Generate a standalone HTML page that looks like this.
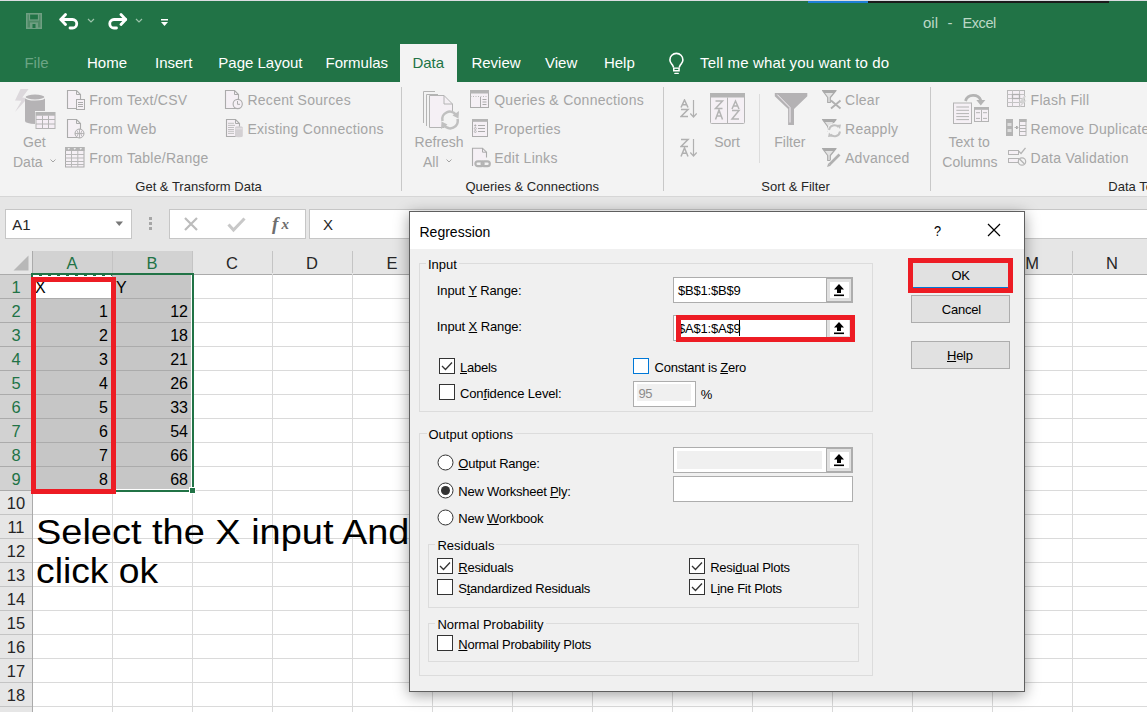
<!DOCTYPE html>
<html><head><meta charset="utf-8"><style>
html,body{margin:0;padding:0}
body{width:1147px;height:712px;overflow:hidden;position:relative;font-family:"Liberation Sans",sans-serif;background:#fff}
.t{position:absolute;white-space:nowrap}
.r{position:absolute;display:block}
u{text-decoration-thickness:1px;text-underline-offset:1px}
</style></head><body>
<div class="r" style="left:0px;top:0px;width:1147px;height:82px;background:#217346"></div>
<div class="r" style="left:0px;top:0px;width:1147px;height:1px;background:#dcdde2"></div>
<div class="r" style="left:808px;top:1px;width:60px;height:2px;background:#1f7fd6"></div>
<div class="r" style="left:868px;top:1px;width:241px;height:2px;background:#1b1b1b"></div>
<svg class="r" style="left:26px;top:13px;" width="16" height="16" viewBox="0 0 16 16"><rect x="0.75" y="0.75" width="14.5" height="14.5" fill="#4f8a66" stroke="#6f9f82" stroke-width="1.5"/><rect x="3.5" y="1" width="9" height="6" fill="#217346" stroke="#6f9f82" stroke-width="1.2"/><rect x="4" y="9.5" width="8" height="5.5" fill="#6f9f82"/><rect x="6.5" y="11" width="3" height="4" fill="#217346"/></svg>
<svg class="r" style="left:59px;top:13px;" width="22" height="18" viewBox="0 0 22 18"><path d="M2 6.5 H13.5 A4.25 4.25 0 0 1 13.5 15 H11" stroke="#fff" stroke-width="2.8" fill="none" stroke-linecap="round"/><path d="M6.5 1.5 L1.8 6.5 L6.5 11.5" stroke="#fff" stroke-width="2.8" fill="none" stroke-linecap="round" stroke-linejoin="round"/></svg>
<svg class="r" style="left:87px;top:18px;" width="8" height="5" viewBox="0 0 8 5"><path d="M1 1 L4 4 L7 1" stroke="#9cc4ab" stroke-width="1.2" fill="none"/></svg>
<svg class="r" style="left:106px;top:13px;" width="22" height="18" viewBox="0 0 22 18"><path d="M19.5 6.5 H8 A4.25 4.25 0 0 0 8 15 H10.5" stroke="#fff" stroke-width="2.8" fill="none" stroke-linecap="round"/><path d="M15 1.5 L19.7 6.5 L15 11.5" stroke="#fff" stroke-width="2.8" fill="none" stroke-linecap="round" stroke-linejoin="round"/></svg>
<svg class="r" style="left:135px;top:18px;" width="8" height="5" viewBox="0 0 8 5"><path d="M1 1 L4 4 L7 1" stroke="#9cc4ab" stroke-width="1.2" fill="none"/></svg>
<svg class="r" style="left:160px;top:18px;" width="9" height="9" viewBox="0 0 9 9"><rect x="1" y="1" width="7" height="1.5" fill="#fff"/><path d="M1 4 H8 L4.5 8 Z" fill="#fff"/></svg>
<div class="t " style="left:923px;top:15.30px;font-size:15px;line-height:15px;color:#bcd8c6;">oil</div>
<div class="t " style="left:947.5px;top:15.30px;font-size:15px;line-height:15px;color:#bcd8c6;">-</div>
<div class="t " style="left:962.6px;top:15.72px;font-size:14.5px;line-height:14.5px;color:#bcd8c6;letter-spacing:-0.45px">Excel</div>
<div class="r" style="left:400px;top:44px;width:57px;height:38px;background:#f3f3f3"></div>
<div class="t " style="left:24.4px;top:54.90px;font-size:15px;line-height:15px;color:#6ca585;">File</div>
<div class="t " style="left:87px;top:54.90px;font-size:15px;line-height:15px;color:#fff;">Home</div>
<div class="t " style="left:155px;top:54.90px;font-size:15px;line-height:15px;color:#fff;">Insert</div>
<div class="t " style="left:218.3px;top:54.90px;font-size:15px;line-height:15px;color:#fff;">Page Layout</div>
<div class="t " style="left:325.6px;top:54.90px;font-size:15px;line-height:15px;color:#fff;">Formulas</div>
<div class="t " style="left:412.4px;top:54.90px;font-size:15px;line-height:15px;color:#217346;">Data</div>
<div class="t " style="left:471.4px;top:54.90px;font-size:15px;line-height:15px;color:#fff;">Review</div>
<div class="t " style="left:545px;top:54.90px;font-size:15px;line-height:15px;color:#fff;">View</div>
<div class="t " style="left:603.9px;top:54.90px;font-size:15px;line-height:15px;color:#fff;">Help</div>
<div class="t " style="left:700.1px;top:54.90px;font-size:15px;line-height:15px;color:#fff;letter-spacing:0.15px">Tell me what you want to do</div>
<svg class="r" style="left:667px;top:52px;" width="19" height="23" viewBox="0 0 19 23"><path d="M6.6 15.5 L5.6 13.2 C4.2 11.3 2.9 10.2 2.9 7.9 A6.5 6.5 0 0 1 15.9 7.9 C15.9 10.2 14.6 11.3 13.2 13.2 L12.2 15.5" stroke="#fff" stroke-width="1.6" fill="none"/><rect x="6" y="15.5" width="6.8" height="4" fill="#fff"/><rect x="7.5" y="16.8" width="3.8" height="1.2" fill="#217346"/><rect x="7.2" y="20.8" width="4.7" height="1.3" rx="0.6" fill="#fff"/></svg>
<div class="r" style="left:0px;top:82px;width:1147px;height:114px;background:#f3f3f3"></div>
<div class="r" style="left:0px;top:196px;width:1147px;height:1px;background:#d6d6d6"></div>
<div class="r" style="left:401px;top:87px;width:1px;height:104px;background:#c8c8c8"></div>
<div class="r" style="left:663px;top:87px;width:1px;height:104px;background:#c8c8c8"></div>
<div class="r" style="left:930px;top:87px;width:1px;height:104px;background:#c8c8c8"></div>
<div class="r" style="left:759px;top:94px;width:1px;height:69px;background:#dcdcdc"></div>
<div class="t " style="left:135.3px;top:179.99px;font-size:13px;line-height:13px;color:#262626;">Get &amp; Transform Data</div>
<div class="t " style="left:465.4px;top:179.99px;font-size:13px;line-height:13px;color:#262626;">Queries &amp; Connections</div>
<div class="t " style="left:761.3px;top:179.99px;font-size:13px;line-height:13px;color:#262626;">Sort &amp; Filter</div>
<div class="t " style="left:1108.3px;top:179.99px;font-size:13px;line-height:13px;color:#262626;">Data Tools</div>
<svg class="r" style="left:14px;top:88px;" width="44" height="44" viewBox="0 0 44 44"><path d="M6.5 1 L14.6 1 L8.3 9.6 L13.5 10.3 L1 24 L7.5 12.8 L1 12.5 Z" fill="#dcd8dc"/>
<path d="M11 9 A10 3 0 0 1 31 9 V33 A10 3 0 0 1 11 33 Z" fill="#b5b3b5"/>
<ellipse cx="21" cy="9" rx="10" ry="3" fill="#b5b3b5" stroke="#f3f3f3" stroke-width="1.2"/>
<rect x="21" y="23" width="22" height="19" fill="#f3f3f3"/>
<rect x="22" y="24.5" width="19" height="16" fill="#f5eef5" stroke="#b4b4b4"/>
<rect x="22" y="24.5" width="19" height="3.2" fill="#b4b4b4"/>
<path d="M22 31.5 H41 M22 36 H41 M28.5 27.5 V40.5 M34.5 27.5 V40.5" stroke="#b4b4b4"/></svg>
<div class="t " style="left:23px;top:135.15px;font-size:14px;line-height:14px;color:#a5a5a5;">Get</div>
<div class="t " style="left:13px;top:155.15px;font-size:14px;line-height:14px;color:#a5a5a5;">Data</div>
<svg class="r" style="left:50px;top:159px;" width="6" height="4" viewBox="0 0 6 4"><path d="M0.5 0.5 L3 3 L5.5 0.5" stroke="#a5a5a5" fill="none"/></svg>
<svg class="r" style="left:66px;top:90px;" width="19" height="20" viewBox="0 0 19 20"><path d="M1.5 0.5 H10.5 L14.5 4.5 V18.5 H1.5 Z" fill="#f5f0f5" stroke="#ababab" stroke-width="1.1"/><path d="M10.5 0.5 V4.5 H14.5" fill="none" stroke="#ababab"/><rect x="10.5" y="9.5" width="8" height="10" fill="#f5f0f5" stroke="#ababab"/><path d="M12 12.5 H17 M12 14.5 H17 M12 16.5 H17" stroke="#ababab"/></svg>
<div class="t " style="left:89.2px;top:93.15px;font-size:14px;line-height:14px;color:#a5a5a5;letter-spacing:0.28px">From Text/CSV</div>
<svg class="r" style="left:66px;top:119px;" width="19" height="20" viewBox="0 0 19 20"><path d="M1.5 0.5 H10.5 L14.5 4.5 V18.5 H1.5 Z" fill="#f5f0f5" stroke="#ababab" stroke-width="1.1"/><path d="M10.5 0.5 V4.5 H14.5" fill="none" stroke="#ababab"/><circle cx="13.5" cy="14.5" r="4.5" fill="#f5f0f5" stroke="#ababab"/><path d="M9 14.5 H18 M13.5 10 V19 M11 11.5 Q13.5 14.5 11 17.5 M16 11.5 Q13.5 14.5 16 17.5" stroke="#ababab" fill="none" stroke-width="0.8"/></svg>
<div class="t " style="left:89.2px;top:121.85px;font-size:14px;line-height:14px;color:#a5a5a5;letter-spacing:0.28px">From Web</div>
<svg class="r" style="left:65px;top:147px;" width="20" height="21" viewBox="0 0 20 21"><rect x="0.5" y="0.5" width="18.5" height="19.5" fill="#f5f0f5" stroke="#ababab"/><rect x="0" y="0" width="19.5" height="4" fill="#b4b4b4"/><path d="M2.5 1.3 H5 L3.75 2.8 Z M8.5 1.3 H11 L9.75 2.8 Z M14.5 1.3 H17 L15.75 2.8 Z" fill="#fff"/><path d="M0.5 7.5 H19 M0.5 11 H19 M0.5 14.5 H19 M0.5 17.5 H19 M6.5 4 V20 M12.8 4 V20" stroke="#b9b9b9"/></svg>
<div class="t " style="left:89.2px;top:151.05px;font-size:14px;line-height:14px;color:#a5a5a5;letter-spacing:0.28px">From Table/Range</div>
<svg class="r" style="left:224px;top:90px;" width="19" height="20" viewBox="0 0 19 20"><path d="M1.5 0.5 H10.5 L14.5 4.5 V18.5 H1.5 Z" fill="#f5f0f5" stroke="#ababab" stroke-width="1.1"/><path d="M10.5 0.5 V4.5 H14.5" fill="none" stroke="#ababab"/><circle cx="13.7" cy="14" r="4.6" fill="#f5f0f5" stroke="#ababab" stroke-width="1.1"/><path d="M13.5 11 V14.3 H16" stroke="#ababab" fill="none"/></svg>
<div class="t " style="left:247.4px;top:93.15px;font-size:14px;line-height:14px;color:#a5a5a5;letter-spacing:0.28px">Recent Sources</div>
<svg class="r" style="left:225px;top:119px;" width="19" height="20" viewBox="0 0 19 20"><path d="M1.5 0.5 H10.5 L14.5 4.5 V17.5 H1.5 Z" fill="#f5f0f5" stroke="#ababab" stroke-width="1.1"/><path d="M10.5 0.5 V4.5 H14.5" fill="none" stroke="#ababab"/><path d="M3 4.3 H9 M3 6.4 H10 M3 8.5 H9 M3 10.5 H9 M3 12.3 H9 M3 14.4 H9" stroke="#b4b4b4" stroke-width="0.8"/><path d="M10 8.5 A3.9 1.2 0 0 1 17.8 8.5 V17 A3.9 1.2 0 0 1 10 17 Z" fill="#d3d0d3"/><path d="M10.5 9.8 H17.3" stroke="#f0eef0" stroke-width="0.7"/></svg>
<div class="t " style="left:247.4px;top:121.85px;font-size:14px;line-height:14px;color:#a5a5a5;letter-spacing:0.28px">Existing Connections</div>
<svg class="r" style="left:422px;top:90px;" width="40" height="40" viewBox="0 0 40 40"><path d="M1.5 33 V1.5 H13" stroke="#b4b4b4" fill="none"/>
<path d="M4.5 36 V4.5 H16" stroke="#b4b4b4" fill="none"/>
<path d="M7.5 5.5 H22 L30.5 14 V37.5 H7.5 Z" fill="#f5f0f5" stroke="#b4b4b4"/>
<path d="M22 5.5 V14 H30.5" stroke="#b4b4b4" fill="none"/>
<circle cx="28" cy="30" r="9.5" fill="#f3f3f3"/>
<path d="M20.5 31 A7.5 7.5 0 0 1 34 25" stroke="#c0c0c0" stroke-width="2.6" fill="none"/>
<path d="M35.5 29 A7.5 7.5 0 0 1 22 35" stroke="#c0c0c0" stroke-width="2.6" fill="none"/>
<path d="M30.5 25.5 L37 21 L36.5 28.5 Z M25.5 34.5 L19 39 L19.5 31.5 Z" fill="#c0c0c0"/></svg>
<div class="t " style="left:414.6px;top:135.15px;font-size:14px;line-height:14px;color:#a5a5a5;">Refresh</div>
<div class="t " style="left:423px;top:155.15px;font-size:14px;line-height:14px;color:#a5a5a5;">All</div>
<svg class="r" style="left:446px;top:159px;" width="6" height="4" viewBox="0 0 6 4"><path d="M0.5 0.5 L3 3 L5.5 0.5" stroke="#a5a5a5" fill="none"/></svg>
<svg class="r" style="left:469px;top:90px;" width="21" height="19" viewBox="0 0 21 19"><rect x="1.5" y="0.5" width="18" height="17" fill="#f5f0f5" stroke="#ababab"/><rect x="1" y="0" width="19" height="3.5" fill="#b4b4b4"/><path d="M11.5 7 V17.5 M13.5 9.5 H17.5 M13.5 12 H17.5 M13.5 14.5 H17.5" stroke="#ababab"/><path d="M1.5 6.5 H19.5" stroke="#b4b4b4" stroke-dasharray="1 1.5" stroke-width="0.9"/></svg>
<div class="t " style="left:494.2px;top:93.15px;font-size:14px;line-height:14px;color:#a5a5a5;letter-spacing:0.28px">Queries &amp; Connections</div>
<svg class="r" style="left:471px;top:118px;" width="18" height="20" viewBox="0 0 18 20"><rect x="1.5" y="1.5" width="15" height="17" fill="#f5f0f5" stroke="#ababab"/><rect x="1" y="1" width="16" height="2.8" fill="#b4b4b4"/><path d="M7 7.5 H14 M7 10.5 H14 M7 13.5 H14" stroke="#ababab"/><path d="M3.2 7.5 H5.4 M4.3 6.4 V8.6" stroke="#ababab" stroke-width="0.9"/><circle cx="4.3" cy="10.5" r="1" fill="none" stroke="#ababab" stroke-width="0.8"/><circle cx="4.3" cy="13.5" r="1" fill="none" stroke="#ababab" stroke-width="0.8"/></svg>
<div class="t " style="left:494.2px;top:121.85px;font-size:14px;line-height:14px;color:#a5a5a5;letter-spacing:0.28px">Properties</div>
<svg class="r" style="left:471px;top:147px;" width="20" height="21" viewBox="0 0 20 21"><path d="M1.5 19 V1.2 H11.5 L15.5 5.2 V19 H1.5 Z" fill="#f5f0f5" stroke="none"/><path d="M1.5 19 V1.2 H11.5 L15.5 5.2 V10.5" fill="none" stroke="#ababab" stroke-width="1.1"/><path d="M11.5 1.2 V5.2 H15.5" stroke="#ababab" fill="none"/><rect x="3.2" y="13" width="17" height="7.5" rx="3.5" fill="#f3f3f3"/><rect x="4.4" y="14.3" width="8.2" height="4.8" rx="2.4" stroke="#b4b4b4" stroke-width="2.2" fill="none"/><rect x="10.6" y="14.3" width="8.2" height="4.8" rx="2.4" stroke="#b4b4b4" stroke-width="2.2" fill="none"/></svg>
<div class="t " style="left:494.2px;top:151.05px;font-size:14px;line-height:14px;color:#a5a5a5;letter-spacing:0.28px">Edit Links</div>
<svg class="r" style="left:680px;top:99px;" width="19" height="20" viewBox="0 0 19 20"><path d="M1 8.5 L4.5 1 L8 8.5 M2.4000000000000004 5.65 H6.6000000000000005 M1 10.5 H8 L1 17.5 H8" stroke="#b0b0b0" stroke-width="1.5" fill="none"/><path d="M13.5 1 V18 M10.3 14.5 L13.5 18 L16.7 14.5" stroke="#b0b0b0" stroke-width="1.2" fill="none"/></svg>
<svg class="r" style="left:680px;top:138px;" width="19" height="20" viewBox="0 0 19 20"><path d="M1 1.5 H8 L1 8.5 H8 M1 18.5 L4.5 10 L8 18.5 M2.4000000000000004 15.27 H6.6000000000000005" stroke="#b0b0b0" stroke-width="1.5" fill="none"/><path d="M13.5 1 V18 M10.3 14.5 L13.5 18 L16.7 14.5" stroke="#b0b0b0" stroke-width="1.2" fill="none"/></svg>
<svg class="r" style="left:710px;top:93px;" width="36" height="32" viewBox="0 0 36 32"><rect x="0.5" y="0.5" width="34" height="30" rx="1" fill="#f5f0f5" stroke="#b4b4b4"/><rect x="0" y="0" width="35" height="4.5" fill="#b4b4b4"/><path d="M17.5 4.5 V30.5" stroke="#b4b4b4"/>
<path d="M5.5 8 H12.5 L5.5 15.5 H12.5 M5.5 26.5 L9.0 17 L12.5 26.5 M6.9 22.89 H11.100000000000001 M22 16 L25.5 8 L29 16 M23.4 12.96 H27.6 M22 17.5 H29 L22 26.0 H29" stroke="#b4b4b4" stroke-width="1.5" fill="none"/></svg>
<div class="t " style="left:714.2px;top:135.15px;font-size:14px;line-height:14px;color:#a5a5a5;">Sort</div>
<svg class="r" style="left:774px;top:92px;" width="35" height="34" viewBox="0 0 35 34"><path d="M0.8 0.9 H33.3 V4.3 L20 17.1 V32.9 H14.1 V17.1 L0.8 4.3 Z" fill="#b4b2b4"/><path d="M3.3 2.6 L16 15.5 V30.5" stroke="#f5f0f5" stroke-width="1" fill="none"/></svg>
<div class="t " style="left:774.3px;top:135.15px;font-size:14px;line-height:14px;color:#a5a5a5;">Filter</div>
<svg class="r" style="left:821px;top:89px;" width="21" height="21" viewBox="0 0 21 21"><path d="M1.5 1.5 H15 L9.3 8.5 V13.5 H6.7 V8.5 Z" fill="#e2e2e2" stroke="#ababab" stroke-width="1.2" stroke-linejoin="round"/><path d="M1 1 H15.5 L13.2 4 H3.3 Z" fill="#a9a9a9"/><path d="M10 11.5 L19.5 19.5 M19.5 11.5 L10 19.5" stroke="#b0b0b0" stroke-width="1.9"/></svg>
<div class="t " style="left:845px;top:93.15px;font-size:14px;line-height:14px;color:#a5a5a5;letter-spacing:0.28px">Clear</div>
<svg class="r" style="left:821px;top:118px;" width="21" height="21" viewBox="0 0 21 21"><path d="M1.5 1.5 H15 L9.3 8.5 V13.5 H6.7 V8.5 Z" fill="#e2e2e2" stroke="#ababab" stroke-width="1.2" stroke-linejoin="round"/><path d="M1 1 H15.5 L13.2 4 H3.3 Z" fill="#a9a9a9"/><circle cx="13.5" cy="12.5" r="7.5" fill="#f3f3f3"/><path d="M8 12 A5.5 5.5 0 0 1 17.5 9 M19 13.5 A5.5 5.5 0 0 1 9.5 16.5" stroke="#c0c0c0" stroke-width="2" fill="none"/><path d="M15.5 7 L20 6.5 L19 11 Z M11.5 18.5 L7 19 L8 14.5 Z" fill="#c0c0c0"/></svg>
<div class="t " style="left:845px;top:121.85px;font-size:14px;line-height:14px;color:#a5a5a5;letter-spacing:0.28px">Reapply</div>
<svg class="r" style="left:821px;top:147px;" width="21" height="21" viewBox="0 0 21 21"><path d="M1.5 1.5 H15 L9.3 8.5 V13.5 H6.7 V8.5 Z" fill="#e2e2e2" stroke="#ababab" stroke-width="1.2" stroke-linejoin="round"/><path d="M1 1 H15.5 L13.2 4 H3.3 Z" fill="#a9a9a9"/><path d="M18.5 7.5 L8.5 17.5" stroke="#f3f3f3" stroke-width="4.5"/><path d="M18.5 7.5 L8.5 17.5" stroke="#b0b0b0" stroke-width="2.6"/><path d="M7.3 16.2 L9.8 18.7 L6 20 Z" fill="#b0b0b0"/></svg>
<div class="t " style="left:845px;top:151.05px;font-size:14px;line-height:14px;color:#a5a5a5;letter-spacing:0.28px">Advanced</div>
<svg class="r" style="left:952px;top:92px;" width="38" height="33" viewBox="0 0 38 33"><rect x="1.5" y="11" width="18" height="20.5" fill="#f5f0f5" stroke="#b4b4b4"/><path d="M4.3 15 H17 M4.3 18.3 H17 M4.3 21.6 H17 M4.3 24.6 H17 M4.3 27.6 H17" stroke="#b4b4b4"/>
<rect x="22.5" y="15.5" width="14" height="14" fill="#f5f0f5" stroke="#b4b4b4"/><rect x="22" y="15" width="15" height="2.8" fill="#b4b4b4"/><path d="M29.5 17.8 V29.5 M24 20.7 H28 M31 20.7 H35 M24 26.4 H28 M31 26.4 H35" stroke="#b4b4b4"/>
<path d="M13.5 9 A8 7.5 0 0 1 28.8 8.5" stroke="#b4b4b4" stroke-width="2.8" fill="none"/><path d="M24.3 8 L33.3 8 L28.8 13.5 Z" fill="#b4b4b4"/></svg>
<div class="t " style="left:948.5px;top:135.15px;font-size:14px;line-height:14px;color:#a5a5a5;">Text to</div>
<div class="t " style="left:942.3px;top:155.15px;font-size:14px;line-height:14px;color:#a5a5a5;">Columns</div>
<svg class="r" style="left:1006px;top:89px;" width="21" height="20" viewBox="0 0 21 20"><rect x="1.5" y="1.5" width="17" height="16" fill="#f5f0f5" stroke="#b9b9b9"/><path d="M1.5 5.5 H18.5 M1.5 9.5 H18.5 M1.5 13.5 H18.5 M6.5 1.5 V17.5 M13.5 1.5 V17.5" stroke="#c4c4c4"/><rect x="6.5" y="5.5" width="7" height="4" fill="#f5f0f5" stroke="#b0b0b0" stroke-width="1.3"/><path d="M18 7 L13 13.5 H16 L12.5 19.5 L20.5 11.5 H17.5 L20 7 Z" fill="#d4d4d4"/></svg>
<div class="t " style="left:1030.6px;top:93.15px;font-size:14px;line-height:14px;color:#a5a5a5;letter-spacing:0.28px">Flash Fill</div>
<svg class="r" style="left:1006px;top:118px;" width="21" height="19" viewBox="0 0 21 19"><rect x="0" y="1" width="7" height="17" fill="#b4b4b4"/><rect x="1.5" y="5" width="4" height="3" fill="#dcdcdc"/><rect x="1.5" y="11" width="4" height="3" fill="#dcdcdc"/><rect x="13.5" y="1.5" width="6.5" height="16" fill="#f5f0f5" stroke="#b4b4b4"/><rect x="13" y="1" width="7.5" height="3" fill="#b4b4b4"/><path d="M13.5 7.5 H20 M13.5 10.5 H20 M13.5 13.5 H20" stroke="#b4b4b4"/><path d="M8.5 9.5 H12 M10.5 8 L12 9.5 L10.5 11" stroke="#b4b4b4"/></svg>
<div class="t " style="left:1030.6px;top:121.85px;font-size:14px;line-height:14px;color:#a5a5a5;letter-spacing:0.28px">Remove Duplicates</div>
<svg class="r" style="left:1007px;top:147px;" width="21" height="21" viewBox="0 0 21 21"><rect x="1.5" y="3.5" width="10" height="4" fill="#f5f0f5" stroke="#b4b4b4"/><rect x="1.5" y="11.5" width="10" height="4" fill="#f5f0f5" stroke="#b4b4b4"/><path d="M11.5 4 L14 6.5 L18.5 0.8" stroke="#b4b4b4" stroke-width="1.3" fill="none"/><circle cx="15" cy="14.5" r="3.7" fill="#f3f3f3" stroke="#b4b4b4" stroke-width="1.2"/><path d="M12.5 12 L17.5 17" stroke="#b4b4b4" stroke-width="1.2"/></svg>
<div class="t " style="left:1030.6px;top:151.05px;font-size:14px;line-height:14px;color:#a5a5a5;letter-spacing:0.28px">Data Validation</div>
<div class="r" style="left:0px;top:197px;width:1147px;height:54px;background:#e6e6e6"></div>
<div class="r" style="left:5px;top:209px;width:127px;height:30px;background:#fff;border:1px solid #c6c6c6;box-sizing:border-box"></div>
<div class="t " style="left:12.2px;top:217.10px;font-size:15px;line-height:15px;color:#262626;">A1</div>
<svg class="r" style="left:115px;top:221px;" width="9" height="6" viewBox="0 0 9 6"><path d="M0.5 0.5 H8 L4.25 5 Z" fill="#777"/></svg>
<div class="r" style="left:149px;top:217px;width:3px;height:3px;background:#a6a6a6"></div>
<div class="r" style="left:149px;top:222px;width:3px;height:3px;background:#a6a6a6"></div>
<div class="r" style="left:149px;top:227px;width:3px;height:3px;background:#a6a6a6"></div>
<div class="r" style="left:169px;top:209px;width:137px;height:30px;background:#fff;border:1px solid #c6c6c6;box-sizing:border-box"></div>
<svg class="r" style="left:183px;top:216px;" width="16" height="16" viewBox="0 0 16 16"><path d="M2 2 L14 14 M14 2 L2 14" stroke="#bcbcbc" stroke-width="2.2"/></svg>
<svg class="r" style="left:227px;top:216px;" width="19" height="17" viewBox="0 0 19 17"><path d="M1.5 8.5 L6.5 14 L17.5 2.5" stroke="#c8c8c8" stroke-width="3" fill="none"/></svg>
<div class="t " style="left:272px;top:213.91px;font-size:19px;line-height:19px;color:#6e6e6e;font-family:'Liberation Serif',serif;font-weight:bold"><i>f</i></div>
<div class="t " style="left:281.5px;top:217.30px;font-size:15px;line-height:15px;color:#6e6e6e;font-family:'Liberation Serif',serif;font-weight:bold"><i>x</i></div>
<div class="r" style="left:309px;top:209px;width:900px;height:30px;background:#fff;border:1px solid #c6c6c6;box-sizing:border-box"></div>
<div class="t " style="left:323px;top:217.10px;font-size:15px;line-height:15px;color:#262626;">X</div>
<div class="r" style="left:0px;top:251px;width:1147px;height:461px;background:#fff"></div>
<div class="r" style="left:0px;top:251px;width:1147px;height:23px;background:#e6e6e6"></div>
<div class="r" style="left:32px;top:251px;width:160px;height:23px;background:#d2d2d2"></div>
<div class="r" style="left:0px;top:274px;width:32px;height:438px;background:#e6e6e6"></div>
<div class="r" style="left:0px;top:274px;width:32px;height:216px;background:#d2d2d2"></div>
<div class="r" style="left:0px;top:274px;width:1147px;height:1px;background:#ababab"></div>
<div class="r" style="left:32px;top:251px;width:1px;height:461px;background:#ababab"></div>
<svg class="r" style="left:13px;top:255px;" width="16" height="16" viewBox="0 0 16 16"><path d="M15.5 0.5 V15.5 H0.5 Z" fill="#b8b8b8"/></svg>
<div class="r" style="left:112px;top:251px;width:1px;height:22px;background:#c4c4c4"></div>
<div class="t" style="left:32px;top:254.93px;width:80px;text-align:center;font-size:16.5px;line-height:16.5px;color:#217346">A</div>
<div class="r" style="left:192px;top:251px;width:1px;height:22px;background:#c4c4c4"></div>
<div class="t" style="left:112px;top:254.93px;width:80px;text-align:center;font-size:16.5px;line-height:16.5px;color:#217346">B</div>
<div class="r" style="left:272px;top:251px;width:1px;height:22px;background:#c4c4c4"></div>
<div class="t" style="left:192px;top:254.93px;width:80px;text-align:center;font-size:16.5px;line-height:16.5px;color:#262626">C</div>
<div class="r" style="left:352px;top:251px;width:1px;height:22px;background:#c4c4c4"></div>
<div class="t" style="left:272px;top:254.93px;width:80px;text-align:center;font-size:16.5px;line-height:16.5px;color:#262626">D</div>
<div class="r" style="left:432px;top:251px;width:1px;height:22px;background:#c4c4c4"></div>
<div class="t" style="left:352px;top:254.93px;width:80px;text-align:center;font-size:16.5px;line-height:16.5px;color:#262626">E</div>
<div class="r" style="left:512px;top:251px;width:1px;height:22px;background:#c4c4c4"></div>
<div class="t" style="left:432px;top:254.93px;width:80px;text-align:center;font-size:16.5px;line-height:16.5px;color:#262626">F</div>
<div class="r" style="left:592px;top:251px;width:1px;height:22px;background:#c4c4c4"></div>
<div class="t" style="left:512px;top:254.93px;width:80px;text-align:center;font-size:16.5px;line-height:16.5px;color:#262626">G</div>
<div class="r" style="left:672px;top:251px;width:1px;height:22px;background:#c4c4c4"></div>
<div class="t" style="left:592px;top:254.93px;width:80px;text-align:center;font-size:16.5px;line-height:16.5px;color:#262626">H</div>
<div class="r" style="left:752px;top:251px;width:1px;height:22px;background:#c4c4c4"></div>
<div class="t" style="left:672px;top:254.93px;width:80px;text-align:center;font-size:16.5px;line-height:16.5px;color:#262626">I</div>
<div class="r" style="left:832px;top:251px;width:1px;height:22px;background:#c4c4c4"></div>
<div class="t" style="left:752px;top:254.93px;width:80px;text-align:center;font-size:16.5px;line-height:16.5px;color:#262626">J</div>
<div class="r" style="left:912px;top:251px;width:1px;height:22px;background:#c4c4c4"></div>
<div class="t" style="left:832px;top:254.93px;width:80px;text-align:center;font-size:16.5px;line-height:16.5px;color:#262626">K</div>
<div class="r" style="left:992px;top:251px;width:1px;height:22px;background:#c4c4c4"></div>
<div class="t" style="left:912px;top:254.93px;width:80px;text-align:center;font-size:16.5px;line-height:16.5px;color:#262626">L</div>
<div class="r" style="left:1072px;top:251px;width:1px;height:22px;background:#c4c4c4"></div>
<div class="t" style="left:992px;top:254.93px;width:80px;text-align:center;font-size:16.5px;line-height:16.5px;color:#262626">M</div>
<div class="r" style="left:1152px;top:251px;width:1px;height:22px;background:#c4c4c4"></div>
<div class="t" style="left:1072px;top:254.93px;width:80px;text-align:center;font-size:16.5px;line-height:16.5px;color:#262626">N</div>
<div class="r" style="left:0px;top:298px;width:32px;height:1px;background:#ababab"></div>
<div class="r" style="left:33px;top:298px;width:1114px;height:1px;background:#dadada"></div>
<div class="t" style="left:0px;top:278.93px;width:32px;text-align:center;font-size:16.5px;line-height:16.5px;color:#217346">1</div>
<div class="r" style="left:0px;top:322px;width:32px;height:1px;background:#ababab"></div>
<div class="r" style="left:33px;top:322px;width:1114px;height:1px;background:#dadada"></div>
<div class="t" style="left:0px;top:302.93px;width:32px;text-align:center;font-size:16.5px;line-height:16.5px;color:#217346">2</div>
<div class="r" style="left:0px;top:346px;width:32px;height:1px;background:#ababab"></div>
<div class="r" style="left:33px;top:346px;width:1114px;height:1px;background:#dadada"></div>
<div class="t" style="left:0px;top:326.93px;width:32px;text-align:center;font-size:16.5px;line-height:16.5px;color:#217346">3</div>
<div class="r" style="left:0px;top:370px;width:32px;height:1px;background:#ababab"></div>
<div class="r" style="left:33px;top:370px;width:1114px;height:1px;background:#dadada"></div>
<div class="t" style="left:0px;top:350.93px;width:32px;text-align:center;font-size:16.5px;line-height:16.5px;color:#217346">4</div>
<div class="r" style="left:0px;top:394px;width:32px;height:1px;background:#ababab"></div>
<div class="r" style="left:33px;top:394px;width:1114px;height:1px;background:#dadada"></div>
<div class="t" style="left:0px;top:374.93px;width:32px;text-align:center;font-size:16.5px;line-height:16.5px;color:#217346">5</div>
<div class="r" style="left:0px;top:418px;width:32px;height:1px;background:#ababab"></div>
<div class="r" style="left:33px;top:418px;width:1114px;height:1px;background:#dadada"></div>
<div class="t" style="left:0px;top:398.93px;width:32px;text-align:center;font-size:16.5px;line-height:16.5px;color:#217346">6</div>
<div class="r" style="left:0px;top:442px;width:32px;height:1px;background:#ababab"></div>
<div class="r" style="left:33px;top:442px;width:1114px;height:1px;background:#dadada"></div>
<div class="t" style="left:0px;top:422.93px;width:32px;text-align:center;font-size:16.5px;line-height:16.5px;color:#217346">7</div>
<div class="r" style="left:0px;top:466px;width:32px;height:1px;background:#ababab"></div>
<div class="r" style="left:33px;top:466px;width:1114px;height:1px;background:#dadada"></div>
<div class="t" style="left:0px;top:446.93px;width:32px;text-align:center;font-size:16.5px;line-height:16.5px;color:#217346">8</div>
<div class="r" style="left:0px;top:490px;width:32px;height:1px;background:#ababab"></div>
<div class="r" style="left:33px;top:490px;width:1114px;height:1px;background:#dadada"></div>
<div class="t" style="left:0px;top:470.93px;width:32px;text-align:center;font-size:16.5px;line-height:16.5px;color:#217346">9</div>
<div class="r" style="left:0px;top:514px;width:32px;height:1px;background:#c4c4c4"></div>
<div class="r" style="left:33px;top:514px;width:1114px;height:1px;background:#dadada"></div>
<div class="t" style="left:0px;top:494.93px;width:32px;text-align:center;font-size:16.5px;line-height:16.5px;color:#262626">10</div>
<div class="r" style="left:0px;top:538px;width:32px;height:1px;background:#c4c4c4"></div>
<div class="r" style="left:33px;top:538px;width:1114px;height:1px;background:#dadada"></div>
<div class="t" style="left:0px;top:518.93px;width:32px;text-align:center;font-size:16.5px;line-height:16.5px;color:#262626">11</div>
<div class="r" style="left:0px;top:562px;width:32px;height:1px;background:#c4c4c4"></div>
<div class="r" style="left:33px;top:562px;width:1114px;height:1px;background:#dadada"></div>
<div class="t" style="left:0px;top:542.93px;width:32px;text-align:center;font-size:16.5px;line-height:16.5px;color:#262626">12</div>
<div class="r" style="left:0px;top:586px;width:32px;height:1px;background:#c4c4c4"></div>
<div class="r" style="left:33px;top:586px;width:1114px;height:1px;background:#dadada"></div>
<div class="t" style="left:0px;top:566.93px;width:32px;text-align:center;font-size:16.5px;line-height:16.5px;color:#262626">13</div>
<div class="r" style="left:0px;top:610px;width:32px;height:1px;background:#c4c4c4"></div>
<div class="r" style="left:33px;top:610px;width:1114px;height:1px;background:#dadada"></div>
<div class="t" style="left:0px;top:590.93px;width:32px;text-align:center;font-size:16.5px;line-height:16.5px;color:#262626">14</div>
<div class="r" style="left:0px;top:634px;width:32px;height:1px;background:#c4c4c4"></div>
<div class="r" style="left:33px;top:634px;width:1114px;height:1px;background:#dadada"></div>
<div class="t" style="left:0px;top:614.93px;width:32px;text-align:center;font-size:16.5px;line-height:16.5px;color:#262626">15</div>
<div class="r" style="left:0px;top:658px;width:32px;height:1px;background:#c4c4c4"></div>
<div class="r" style="left:33px;top:658px;width:1114px;height:1px;background:#dadada"></div>
<div class="t" style="left:0px;top:638.93px;width:32px;text-align:center;font-size:16.5px;line-height:16.5px;color:#262626">16</div>
<div class="r" style="left:0px;top:682px;width:32px;height:1px;background:#c4c4c4"></div>
<div class="r" style="left:33px;top:682px;width:1114px;height:1px;background:#dadada"></div>
<div class="t" style="left:0px;top:662.93px;width:32px;text-align:center;font-size:16.5px;line-height:16.5px;color:#262626">17</div>
<div class="r" style="left:0px;top:706px;width:32px;height:1px;background:#c4c4c4"></div>
<div class="r" style="left:33px;top:706px;width:1114px;height:1px;background:#dadada"></div>
<div class="t" style="left:0px;top:686.93px;width:32px;text-align:center;font-size:16.5px;line-height:16.5px;color:#262626">18</div>
<div class="r" style="left:0px;top:730px;width:32px;height:1px;background:#c4c4c4"></div>
<div class="r" style="left:33px;top:730px;width:1114px;height:1px;background:#dadada"></div>
<div class="t" style="left:0px;top:710.93px;width:32px;text-align:center;font-size:16.5px;line-height:16.5px;color:#262626">19</div>
<div class="r" style="left:112px;top:274px;width:1px;height:438px;background:#dadada"></div>
<div class="r" style="left:192px;top:274px;width:1px;height:438px;background:#dadada"></div>
<div class="r" style="left:272px;top:274px;width:1px;height:438px;background:#dadada"></div>
<div class="r" style="left:352px;top:274px;width:1px;height:438px;background:#dadada"></div>
<div class="r" style="left:432px;top:274px;width:1px;height:438px;background:#dadada"></div>
<div class="r" style="left:512px;top:274px;width:1px;height:438px;background:#dadada"></div>
<div class="r" style="left:592px;top:274px;width:1px;height:438px;background:#dadada"></div>
<div class="r" style="left:672px;top:274px;width:1px;height:438px;background:#dadada"></div>
<div class="r" style="left:752px;top:274px;width:1px;height:438px;background:#dadada"></div>
<div class="r" style="left:832px;top:274px;width:1px;height:438px;background:#dadada"></div>
<div class="r" style="left:912px;top:274px;width:1px;height:438px;background:#dadada"></div>
<div class="r" style="left:992px;top:274px;width:1px;height:438px;background:#dadada"></div>
<div class="r" style="left:1072px;top:274px;width:1px;height:438px;background:#dadada"></div>
<div class="r" style="left:33px;top:274px;width:159px;height:216px;background:#c6c6c6"></div>
<div class="r" style="left:33px;top:298px;width:159px;height:1px;background:#ababab"></div>
<div class="r" style="left:33px;top:322px;width:159px;height:1px;background:#ababab"></div>
<div class="r" style="left:33px;top:346px;width:159px;height:1px;background:#ababab"></div>
<div class="r" style="left:33px;top:370px;width:159px;height:1px;background:#ababab"></div>
<div class="r" style="left:33px;top:394px;width:159px;height:1px;background:#ababab"></div>
<div class="r" style="left:33px;top:418px;width:159px;height:1px;background:#ababab"></div>
<div class="r" style="left:33px;top:442px;width:159px;height:1px;background:#ababab"></div>
<div class="r" style="left:33px;top:466px;width:159px;height:1px;background:#ababab"></div>
<div class="r" style="left:112px;top:274px;width:1px;height:216px;background:#ababab"></div>
<div class="r" style="left:33px;top:274px;width:79px;height:24px;background:#fff"></div>
<div class="r" style="left:191px;top:275px;width:1px;height:215px;background:#fff"></div>
<div class="r" style="left:33px;top:489px;width:159px;height:1px;background:#fff"></div>
<div class="r" style="left:31px;top:273px;width:163px;height:219px;border:2px solid #217346;box-sizing:border-box"></div>
<div class="r" style="left:189px;top:487px;width:7px;height:7px;background:#fff"></div>
<div class="r" style="left:190px;top:488px;width:5px;height:5px;background:#217346"></div>
<div class="r" style="left:33px;top:275px;width:79px;height:1px;background:repeating-linear-gradient(90deg,#fff 0 6px,#217346 6px 9px)"></div>
<div class="r" style="left:33px;top:276px;width:79px;height:1px;background:#fff"></div>
<div class="t " style="left:35px;top:279.75px;font-size:16px;line-height:16px;color:#000;">X</div>
<div class="t " style="left:116px;top:279.75px;font-size:16px;line-height:16px;color:#000;">Y</div>
<div class="t" style="left:33px;top:303.95px;width:75px;text-align:right;font-size:16px;line-height:16px;color:#000">1</div>
<div class="t" style="left:113px;top:303.95px;width:75px;text-align:right;font-size:16px;line-height:16px;color:#000">12</div>
<div class="t" style="left:33px;top:327.95px;width:75px;text-align:right;font-size:16px;line-height:16px;color:#000">2</div>
<div class="t" style="left:113px;top:327.95px;width:75px;text-align:right;font-size:16px;line-height:16px;color:#000">18</div>
<div class="t" style="left:33px;top:351.95px;width:75px;text-align:right;font-size:16px;line-height:16px;color:#000">3</div>
<div class="t" style="left:113px;top:351.95px;width:75px;text-align:right;font-size:16px;line-height:16px;color:#000">21</div>
<div class="t" style="left:33px;top:375.95px;width:75px;text-align:right;font-size:16px;line-height:16px;color:#000">4</div>
<div class="t" style="left:113px;top:375.95px;width:75px;text-align:right;font-size:16px;line-height:16px;color:#000">26</div>
<div class="t" style="left:33px;top:399.95px;width:75px;text-align:right;font-size:16px;line-height:16px;color:#000">5</div>
<div class="t" style="left:113px;top:399.95px;width:75px;text-align:right;font-size:16px;line-height:16px;color:#000">33</div>
<div class="t" style="left:33px;top:423.95px;width:75px;text-align:right;font-size:16px;line-height:16px;color:#000">6</div>
<div class="t" style="left:113px;top:423.95px;width:75px;text-align:right;font-size:16px;line-height:16px;color:#000">54</div>
<div class="t" style="left:33px;top:447.95px;width:75px;text-align:right;font-size:16px;line-height:16px;color:#000">7</div>
<div class="t" style="left:113px;top:447.95px;width:75px;text-align:right;font-size:16px;line-height:16px;color:#000">66</div>
<div class="t" style="left:33px;top:471.95px;width:75px;text-align:right;font-size:16px;line-height:16px;color:#000">8</div>
<div class="t" style="left:113px;top:471.95px;width:75px;text-align:right;font-size:16px;line-height:16px;color:#000">68</div>
<div class="r" style="left:31px;top:277px;width:85px;height:217px;border:5px solid #ed1c24;box-sizing:border-box"></div>
<div class="t" style="left:36px;top:515.49px;font-size:34.5px;line-height:34.5px;color:#000;transform:scaleX(1.1);transform-origin:0 0">Select the X input And</div>
<div class="t" style="left:36px;top:554.09px;font-size:34.5px;line-height:34.5px;color:#000;transform:scaleX(1.08);transform-origin:0 0">click ok</div>
<div class="r" style="left:409px;top:211px;width:616px;height:481px;background:#f0f0f0;border:1px solid #5f5f5f;box-sizing:border-box;box-shadow:0 3px 14px rgba(0,0,0,0.38)"></div>
<div class="r" style="left:410px;top:212px;width:614px;height:37px;background:#fff"></div>
<div class="t " style="left:419.5px;top:224.65px;font-size:14px;line-height:14px;color:#000;">Regression</div>
<div class="t " style="left:934px;top:223.30px;font-size:15px;line-height:15px;color:#000;transform:scaleX(0.85);transform-origin:0 0">?</div>
<svg class="r" style="left:987px;top:223px;" width="14" height="14" viewBox="0 0 14 14"><path d="M1 1 L13 13 M13 1 L1 13" stroke="#000" stroke-width="1.2"/></svg>
<div class="r" style="left:419px;top:263px;width:454px;height:149px;border:1px solid #dcdcdc;box-sizing:border-box"></div>
<div class="t" style="left:426px;top:257.99px;font-size:13px;line-height:13px;color:#000;background:#f0f0f0;padding:0 2px 0 2px">Input</div>
<div class="t " style="left:436.8px;top:284.19px;font-size:13px;line-height:13px;color:#000;letter-spacing:-0.12px">Input <u>Y</u> Range:</div>
<div class="t " style="left:436.8px;top:320.19px;font-size:13px;line-height:13px;color:#000;letter-spacing:-0.12px">Input <u>X</u> Range:</div>
<div class="r" style="left:673px;top:277px;width:180px;height:26px;background:#fff;border:1px solid #adadad;box-sizing:border-box"></div>
<div class="r" style="left:826px;top:277px;width:27px;height:26px;background:#e1e1e1;border:2px solid #adadad;border-left-width:1px;box-sizing:border-box"></div>
<div class="r" style="left:830px;top:282px;width:19px;height:16px;background:#fff"></div>
<svg class="r" style="left:832.5px;top:283px;" width="12" height="14" viewBox="0 0 12 14"><path d="M6 1 L11 6.5 H8 V10 H4 V6.5 H1 Z" fill="#000"/><rect x="1" y="11.5" width="10" height="1.6" fill="#000"/></svg>
<div class="t " style="left:678px;top:283.99px;font-size:13px;line-height:13px;color:#000;letter-spacing:-0.2px">$B$1:$B$9</div>
<div class="r" style="left:673px;top:315px;width:180px;height:26px;background:#fff;border:1px solid #adadad;box-sizing:border-box"></div>
<div class="r" style="left:826px;top:315px;width:27px;height:26px;background:#e1e1e1;border:2px solid #adadad;border-left-width:1px;box-sizing:border-box"></div>
<div class="r" style="left:830px;top:320px;width:19px;height:16px;background:#fff"></div>
<svg class="r" style="left:832.5px;top:321px;" width="12" height="14" viewBox="0 0 12 14"><path d="M6 1 L11 6.5 H8 V10 H4 V6.5 H1 Z" fill="#000"/><rect x="1" y="11.5" width="10" height="1.6" fill="#000"/></svg>
<div class="t " style="left:678px;top:321.99px;font-size:13px;line-height:13px;color:#000;letter-spacing:-0.2px">$A$1:$A$9</div>
<div class="r" style="left:739px;top:320px;width:1px;height:16px;background:#000"></div>
<div class="r" style="left:676px;top:315px;width:179px;height:27px;border:5px solid #ed1c24;box-sizing:border-box"></div>
<div class="r" style="left:439px;top:358px;width:16px;height:16px;background:#fff;border:1px solid #333;box-sizing:border-box"></div>
<svg class="r" style="left:441px;top:361px;" width="12" height="10" viewBox="0 0 12 10"><path d="M1 5 L4.5 8.5 L11 1.5" stroke="#333" stroke-width="1.3" fill="none"/></svg>
<div class="t " style="left:460px;top:361.49px;font-size:13px;line-height:13px;color:#000;;letter-spacing:-0.25px"><u>L</u>abels</div>
<div class="r" style="left:439px;top:384px;width:16px;height:16px;background:#fff;border:1px solid #333;box-sizing:border-box"></div>
<div class="t " style="left:460px;top:387.19px;font-size:13px;line-height:13px;color:#000;letter-spacing:-0.15px">Con<u>f</u>idence Level:</div>
<div class="r" style="left:633px;top:358px;width:16px;height:16px;background:#fff;border:1px solid #0078d7;box-sizing:border-box"></div>
<div class="t " style="left:654.6px;top:361.29px;font-size:13px;line-height:13px;color:#000;;letter-spacing:-0.25px">Constant is <u>Z</u>ero</div>
<div class="r" style="left:633px;top:381px;width:63px;height:26px;background:#fff;border:1px solid #adadad;box-sizing:border-box"></div>
<div class="r" style="left:637px;top:384px;width:54px;height:17px;background:#f0f0f0"></div>
<div class="t " style="left:638.4px;top:387.19px;font-size:13px;line-height:13px;color:#8c8c8c;;letter-spacing:-0.25px">95</div>
<div class="t " style="left:700.7px;top:388.39px;font-size:13px;line-height:13px;color:#000;;letter-spacing:-0.25px">%</div>
<div class="r" style="left:419px;top:433px;width:454px;height:243px;border:1px solid #dcdcdc;box-sizing:border-box"></div>
<div class="t" style="left:426.5px;top:427.79px;font-size:13px;line-height:13px;color:#000;background:#f0f0f0;padding:0 2px 0 2px">Output options</div>
<svg class="r" style="left:437px;top:454px;" width="17" height="17" viewBox="0 0 17 17"><circle cx="8.5" cy="8.5" r="7.5" fill="#fff" stroke="#333" stroke-width="1"/></svg>
<div class="t " style="left:458.3px;top:457.19px;font-size:13px;line-height:13px;color:#000;;letter-spacing:-0.25px"><u>O</u>utput Range:</div>
<svg class="r" style="left:437px;top:482px;" width="17" height="17" viewBox="0 0 17 17"><circle cx="8.5" cy="8.5" r="7.5" fill="#fff" stroke="#333" stroke-width="1"/><circle cx="8.5" cy="8.5" r="4.5" fill="#333"/></svg>
<div class="t " style="left:458.3px;top:485.29px;font-size:13px;line-height:13px;color:#000;;letter-spacing:-0.25px">New Worksheet <u>P</u>ly:</div>
<svg class="r" style="left:437px;top:509px;" width="17" height="17" viewBox="0 0 17 17"><circle cx="8.5" cy="8.5" r="7.5" fill="#fff" stroke="#333" stroke-width="1"/></svg>
<div class="t " style="left:458.3px;top:511.99px;font-size:13px;line-height:13px;color:#000;;letter-spacing:-0.25px">New <u>W</u>orkbook</div>
<div class="r" style="left:673px;top:447px;width:180px;height:26px;background:#fff;border:1px solid #adadad;box-sizing:border-box"></div>
<div class="r" style="left:677px;top:451px;width:145px;height:18px;background:#f0f0f0"></div>
<div class="r" style="left:826px;top:447px;width:27px;height:26px;background:#e1e1e1;border:2px solid #adadad;border-left-width:1px;box-sizing:border-box"></div>
<div class="r" style="left:830px;top:452px;width:19px;height:16px;background:#fff"></div>
<svg class="r" style="left:832.5px;top:453px;" width="12" height="14" viewBox="0 0 12 14"><path d="M6 1 L11 6.5 H8 V10 H4 V6.5 H1 Z" fill="#000"/><rect x="1" y="11.5" width="10" height="1.6" fill="#000"/></svg>
<div class="r" style="left:673px;top:476px;width:180px;height:26px;background:#fff;border:1px solid #adadad;box-sizing:border-box"></div>
<div class="r" style="left:428px;top:544px;width:431px;height:64px;border:1px solid #dcdcdc;box-sizing:border-box"></div>
<div class="t" style="left:435.4px;top:538.59px;font-size:13px;line-height:13px;color:#000;background:#f0f0f0;padding:0 2px 0 2px">Residuals</div>
<div class="r" style="left:437px;top:558px;width:16px;height:16px;background:#fff;border:1px solid #333;box-sizing:border-box"></div>
<svg class="r" style="left:439px;top:561px;" width="12" height="10" viewBox="0 0 12 10"><path d="M1 5 L4.5 8.5 L11 1.5" stroke="#333" stroke-width="1.3" fill="none"/></svg>
<div class="t " style="left:458.3px;top:561.29px;font-size:13px;line-height:13px;color:#000;;letter-spacing:-0.25px"><u>R</u>esiduals</div>
<div class="r" style="left:437px;top:579px;width:16px;height:16px;background:#fff;border:1px solid #333;box-sizing:border-box"></div>
<div class="t " style="left:458.3px;top:581.99px;font-size:13px;line-height:13px;color:#000;;letter-spacing:-0.25px">S<u>t</u>andardized Residuals</div>
<div class="r" style="left:689px;top:558px;width:16px;height:16px;background:#fff;border:1px solid #333;box-sizing:border-box"></div>
<svg class="r" style="left:691px;top:561px;" width="12" height="10" viewBox="0 0 12 10"><path d="M1 5 L4.5 8.5 L11 1.5" stroke="#333" stroke-width="1.3" fill="none"/></svg>
<div class="t " style="left:710.2px;top:561.29px;font-size:13px;line-height:13px;color:#000;;letter-spacing:-0.25px">Resi<u>d</u>ual Plots</div>
<div class="r" style="left:689px;top:579px;width:16px;height:16px;background:#fff;border:1px solid #333;box-sizing:border-box"></div>
<svg class="r" style="left:691px;top:582px;" width="12" height="10" viewBox="0 0 12 10"><path d="M1 5 L4.5 8.5 L11 1.5" stroke="#333" stroke-width="1.3" fill="none"/></svg>
<div class="t " style="left:710.2px;top:581.99px;font-size:13px;line-height:13px;color:#000;;letter-spacing:-0.25px">L<u>i</u>ne Fit Plots</div>
<div class="r" style="left:428px;top:623px;width:431px;height:39px;border:1px solid #dcdcdc;box-sizing:border-box"></div>
<div class="t" style="left:435.4px;top:617.59px;font-size:13px;line-height:13px;color:#000;background:#f0f0f0;padding:0 2px 0 2px">Normal Probability</div>
<div class="r" style="left:437px;top:635px;width:16px;height:16px;background:#fff;border:1px solid #333;box-sizing:border-box"></div>
<div class="t " style="left:458.3px;top:638.09px;font-size:13px;line-height:13px;color:#000;;letter-spacing:-0.25px"><u>N</u>ormal Probability Plots</div>
<div class="r" style="left:912px;top:262px;width:97px;height:27px;background:#e1e1e1;border:1px solid #adadad;box-sizing:border-box"></div>
<div class="r" style="left:913px;top:287px;width:95px;height:1px;background:#0078d7"></div>
<div class="t " style="left:951.4px;top:269.49px;font-size:13px;line-height:13px;color:#000;;letter-spacing:-0.25px">OK</div>
<div class="r" style="left:908px;top:258px;width:105px;height:35px;border:5px solid #ed1c24;box-sizing:border-box"></div>
<div class="r" style="left:911px;top:295px;width:99px;height:28px;background:#e1e1e1;border:1px solid #adadad;box-sizing:border-box"></div>
<div class="t " style="left:941.8px;top:303.39px;font-size:13px;line-height:13px;color:#000;;letter-spacing:-0.25px">Cancel</div>
<div class="r" style="left:911px;top:341px;width:99px;height:28px;background:#e1e1e1;border:1px solid #adadad;box-sizing:border-box"></div>
<div class="t " style="left:947px;top:349.49px;font-size:13px;line-height:13px;color:#000;;letter-spacing:-0.25px"><u>H</u>elp</div>
</body></html>
